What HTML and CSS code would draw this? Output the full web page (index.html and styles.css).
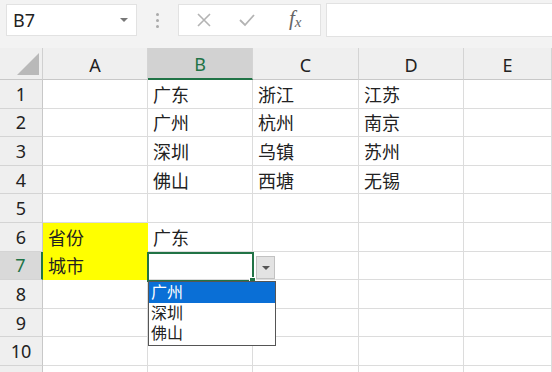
FILE: index.html
```html
<!DOCTYPE html>
<html lang="zh-CN">
<head>
    <meta charset="UTF-8">
    <title>数据验证 - 二级下拉</title>
    <link rel="stylesheet" href="styles.css">
</head>
<body>

    <!-- Pasek formuły -->
    <div class="toolbar">
        <div class="name-box">
            <span>B7</span>
            <span class="caret"></span>
        </div>
        <div class="dots"><i></i><i></i><i></i></div>
        <div class="fx-buttons">
            <svg class="icon" width="16" height="16" viewBox="0 0 16 16"><path d="M2 2 L14 14 M14 2 L2 14" stroke="#b3b3b3" stroke-width="1.6" fill="none"/></svg>
            <svg class="icon" width="18" height="16" viewBox="0 0 18 16"><path d="M2 8 L7 13 L16 3" stroke="#b3b3b3" stroke-width="1.8" fill="none"/></svg>
            <span class="fx">f<sub>x</sub></span>
        </div>
        <div class="formula-input"></div>
    </div>

    <!-- Arkusz -->
    <div class="sheet">
        <div class="row head">
            <div class="corner"><span></span></div>
            <div class="col-head">A</div>
            <div class="col-head active">B</div>
            <div class="col-head">C</div>
            <div class="col-head">D</div>
            <div class="col-head">E</div>
        </div>
        <div class="row">
            <div class="row-head">1</div>
            <div class="cell"></div><div class="cell">广东</div><div class="cell">浙江</div><div class="cell">江苏</div><div class="cell"></div>
        </div>
        <div class="row">
            <div class="row-head">2</div>
            <div class="cell"></div><div class="cell">广州</div><div class="cell">杭州</div><div class="cell">南京</div><div class="cell"></div>
        </div>
        <div class="row">
            <div class="row-head">3</div>
            <div class="cell"></div><div class="cell">深圳</div><div class="cell">乌镇</div><div class="cell">苏州</div><div class="cell"></div>
        </div>
        <div class="row">
            <div class="row-head">4</div>
            <div class="cell"></div><div class="cell">佛山</div><div class="cell">西塘</div><div class="cell">无锡</div><div class="cell"></div>
        </div>
        <div class="row">
            <div class="row-head">5</div>
            <div class="cell"></div><div class="cell"></div><div class="cell"></div><div class="cell"></div><div class="cell"></div>
        </div>
        <div class="row">
            <div class="row-head">6</div>
            <div class="cell yellow">省份</div><div class="cell">广东</div><div class="cell"></div><div class="cell"></div><div class="cell"></div>
        </div>
        <div class="row">
            <div class="row-head active">7</div>
            <div class="cell yellow">城市</div><div class="cell"></div><div class="cell"></div><div class="cell"></div><div class="cell"></div>
        </div>
        <div class="row">
            <div class="row-head">8</div>
            <div class="cell"></div><div class="cell"></div><div class="cell"></div><div class="cell"></div><div class="cell"></div>
        </div>
        <div class="row">
            <div class="row-head">9</div>
            <div class="cell"></div><div class="cell"></div><div class="cell"></div><div class="cell"></div><div class="cell"></div>
        </div>
        <div class="row">
            <div class="row-head">10</div>
            <div class="cell"></div><div class="cell"></div><div class="cell"></div><div class="cell"></div><div class="cell"></div>
        </div>
        <div class="row">
            <div class="row-head"></div>
            <div class="cell"></div><div class="cell"></div><div class="cell"></div><div class="cell"></div><div class="cell"></div>
        </div>

        <!-- Zaznaczona komórka i lista rozwijana -->
        <div class="selection"><span class="handle"></span></div>
        <div class="drop-btn"><span></span></div>
        <div class="drop-list">
            <div class="drop-item selected">广州</div>
            <div class="drop-item">深圳</div>
            <div class="drop-item">佛山</div>
        </div>
    </div>

</body>
</html>
```

FILE: styles.css
```css
/* Tło i czcionka */
body {
    margin: 0;
    height: 372px;
    background: #f3f3f3;
    font-family: "Noto Sans", "Noto Sans CJK SC", sans-serif;
    color: #222;
    overflow: hidden;
}

/* Pasek formuły */
.toolbar {
    display: flex;
    align-items: center;
    height: 32px;
    padding: 4px 0 12px 6px;
}

.name-box {
    width: 131px;
    height: 32px;
    box-sizing: border-box;
    background: #fff;
    border: 1px solid #e2e2e2;
    display: flex;
    align-items: center;
    justify-content: space-between;
    padding: 0 8px 0 6px;
    font-size: 18px;
}

.caret {
    width: 0;
    height: 0;
    border-left: 4px solid transparent;
    border-right: 4px solid transparent;
    border-top: 4px solid #777;
}

.dots {
    width: 41px;
    display: flex;
    flex-direction: column;
    align-items: center;
    gap: 3px;
}

.dots i {
    width: 3px;
    height: 3px;
    background: #aaa;
    border-radius: 50%;
}

.fx-buttons {
    width: 143px;
    height: 32px;
    box-sizing: border-box;
    background: #fff;
    border: 1px solid #e2e2e2;
    display: flex;
    align-items: center;
    padding-left: 17px;
    gap: 26px;
}

.fx {
    font-family: "Liberation Serif", serif;
    font-style: italic;
    font-size: 21px;
    color: #666;
    margin-left: 7px;
    margin-top: -3px;
}

.fx sub {
    font-size: 15px;
    vertical-align: -2px;
}

.formula-input {
    flex: 1;
    height: 32px;
    margin-left: 5px;
    background: #fff;
    border: 1px solid #e2e2e2;
    border-right: none;
}

/* Arkusz */
.sheet {
    position: relative;
    height: 324px;
    overflow: hidden;
    background: #fff;
}

.row {
    display: grid;
    grid-template-columns: 43px 105px 105px 106px 105px 1fr;
    height: 28.6px;
}

.row.head {
    height: 32px;
}

.corner, .col-head, .row-head {
    background: #efefef;
    box-sizing: border-box;
    display: flex;
    align-items: center;
    justify-content: center;
    font-size: 18px;
}

.corner {
    border-right: 1px solid #d0d0d0;
    border-bottom: 1px solid #c8c8c8;
    align-items: flex-end;
    justify-content: flex-end;
    padding: 0 3px 4px 0;
}

.corner span {
    width: 0;
    height: 0;
    border-left: 22px solid transparent;
    border-bottom: 22px solid #b9b9b9;
}

.col-head {
    border-right: 1px solid #d4d4d4;
    border-bottom: 1px solid #c8c8c8;
    padding-top: 2px;
}

.col-head.active {
    background: #d2d2d2;
    color: #217346;
    border-bottom: 2px solid #217346;
}

.row-head {
    border-right: 1px solid #c8c8c8;
    border-bottom: 1px solid #d4d4d4;
}

.row-head.active {
    background: #d9d9d9;
    color: #217346;
    border-right: 2px solid #217346;
}

.cell {
    box-sizing: border-box;
    border-right: 1px solid #dcdcdc;
    border-bottom: 1px solid #dcdcdc;
    display: flex;
    align-items: center;
    padding-left: 5px;
    font-size: 18px;
}

.cell.yellow {
    background: #ffff00;
    border-color: #ffff00;
}

/* Zaznaczenie B7 */
.selection {
    position: absolute;
    left: 147px;
    top: 203.6px;
    width: 107px;
    height: 30.6px;
    box-sizing: border-box;
    border: 2px solid #217346;
}

.handle {
    position: absolute;
    right: -4px;
    bottom: -4px;
    width: 5px;
    height: 5px;
    background: #217346;
    border: 1px solid #fff;
}

.drop-btn {
    position: absolute;
    left: 256px;
    top: 208px;
    width: 19px;
    height: 23px;
    box-sizing: border-box;
    background: #e3e3e3;
    border: 1px solid #c2c2c2;
    display: flex;
    align-items: center;
    justify-content: center;
}

.drop-btn span {
    width: 0;
    height: 0;
    border-left: 4px solid transparent;
    border-right: 4px solid transparent;
    border-top: 4px solid #555;
}

.drop-list {
    position: absolute;
    left: 148px;
    top: 233px;
    width: 128px;
    box-sizing: border-box;
    background: #fff;
    border: 1px solid #555;
    padding-bottom: 1px;
}

.drop-item {
    height: 20.5px;
    line-height: 20.5px;
    padding-left: 2px;
    font-size: 16px;
    color: #222;
}

.drop-item.selected {
    background: #0a6fd6;
    color: #fff;
}
```
